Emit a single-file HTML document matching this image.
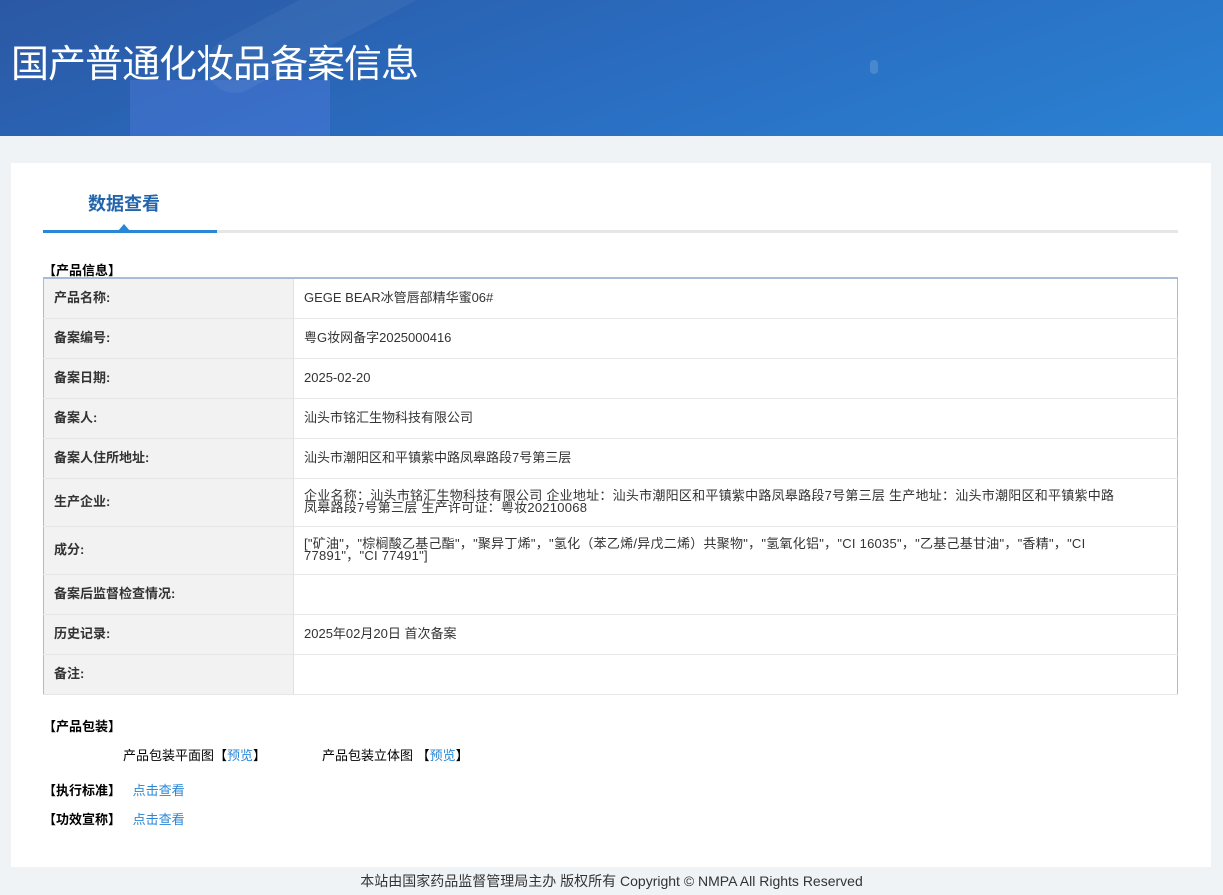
<!DOCTYPE html>
<html><head><meta charset="utf-8"><style>
*{margin:0;padding:0;box-sizing:border-box}
body{width:1223px;height:895px;background:#eff3f6;font-family:"Liberation Sans","Noto Sans CJK SC",sans-serif;color:#333;position:relative;overflow:hidden}
.hd{position:absolute;left:0;top:0;width:1223px;height:136px;background:linear-gradient(160deg,#2b58a3 0%,#2a6cc0 50%,#2a82d3 100%);overflow:hidden}
.hd h1{position:absolute;left:11px;top:33px;font-size:38px;font-weight:normal;color:#fff;letter-spacing:-1px}
.card{position:absolute;left:11px;top:163px;width:1200px;height:704px;background:#fff}
.tab{position:absolute;left:77px;top:27px;font-size:18px;font-weight:bold;color:#2365ab}
.line{position:absolute;left:32px;top:67px;width:1135px;height:3px;background:#e6e6e6}
.line i{position:absolute;left:0;top:0;width:174px;height:3px;background:#2a86d6}
.tri{position:absolute;left:107px;top:61px;width:0;height:0;border-left:6px solid transparent;border-right:6px solid transparent;border-bottom:7px solid #2a86d6}
.sec{position:absolute;font-size:13px;font-weight:bold;color:#000}
table{position:absolute;left:32px;top:114px;width:1135px;border-collapse:collapse;border:1px solid #a9bcd6;border-top:2px solid #a9bcd6;font-size:13px}
td{border-bottom:1px solid #e6e6e6;height:40px;padding:0 10px;line-height:12px}
td.l{width:250px;background:#f2f2f2;font-weight:bold;color:#333;border-right:1px solid #e0e0e0}
tr.t td{height:48px}
td.w{letter-spacing:0.25px}
a{color:#2a86d6;text-decoration:none}
.p{position:absolute;font-size:13px;color:#000}
.ft{position:absolute;left:0;width:1223px;top:871px;text-align:center;font-size:14px;color:#333}
</style></head><body>
<div class="hd">
<div style="position:absolute;left:130px;top:80px;width:200px;height:70px;background:rgba(90,130,230,.35)"></div>
<div style="position:absolute;left:195px;top:-10px;width:260px;height:55px;border-radius:30px;background:rgba(255,255,255,.05);transform:rotate(-28deg)"></div>
<div style="position:absolute;left:870px;top:60px;width:8px;height:14px;border-radius:5px;background:rgba(255,255,255,.15)"></div>
<h1>国产普通化妆品备案信息</h1></div>
<div class="card">
<div class="tab">数据查看</div>
<div class="line"><i></i></div><div class="tri"></div>
<div class="sec" style="left:32px;top:97px">【产品信息】</div>
<table>
<tr><td class="l">产品名称:</td><td>GEGE BEAR冰管唇部精华蜜06#</td></tr>
<tr><td class="l">备案编号:</td><td>粤G妆网备字2025000416</td></tr>
<tr><td class="l">备案日期:</td><td>2025-02-20</td></tr>
<tr><td class="l">备案人:</td><td>汕头市铭汇生物科技有限公司</td></tr>
<tr><td class="l">备案人住所地址:</td><td>汕头市潮阳区和平镇紫中路凤皋路段7号第三层</td></tr>
<tr class="t"><td class="l">生产企业:</td><td class="w">企业名称：汕头市铭汇生物科技有限公司 企业地址：汕头市潮阳区和平镇紫中路凤皋路段7号第三层 生产地址：汕头市潮阳区和平镇紫中路<br>凤皋路段7号第三层 生产许可证：粤妆20210068</td></tr>
<tr class="t"><td class="l">成分:</td><td class="w">["矿油"，"棕榈酸乙基己酯"，"聚异丁烯"，"氢化（苯乙烯/异戊二烯）共聚物"，"氢氧化铝"，"CI 16035"，"乙基己基甘油"，"香精"，"CI<br>77891"，"CI 77491"]</td></tr>
<tr><td class="l">备案后监督检查情况:</td><td></td></tr>
<tr><td class="l">历史记录:</td><td>2025年02月20日 首次备案</td></tr>
<tr><td class="l">备注:</td><td></td></tr>
</table>
<div class="sec" style="left:32px;top:553px">【产品包装】</div>
<div class="p" style="left:112px;top:582px">产品包装平面图【<a>预览</a>】</div>
<div class="p" style="left:311px;top:582px">产品包装立体图 【<a>预览</a>】</div>
<div class="sec" style="left:32px;top:617px">【执行标准】 <a style="font-weight:normal;margin-left:8px">点击查看</a></div>
<div class="sec" style="left:32px;top:646px">【功效宣称】 <a style="font-weight:normal;margin-left:8px">点击查看</a></div>
</div>
<div class="ft">本站由国家药品监督管理局主办 版权所有 Copyright © NMPA All Rights Reserved</div>
</body></html>
